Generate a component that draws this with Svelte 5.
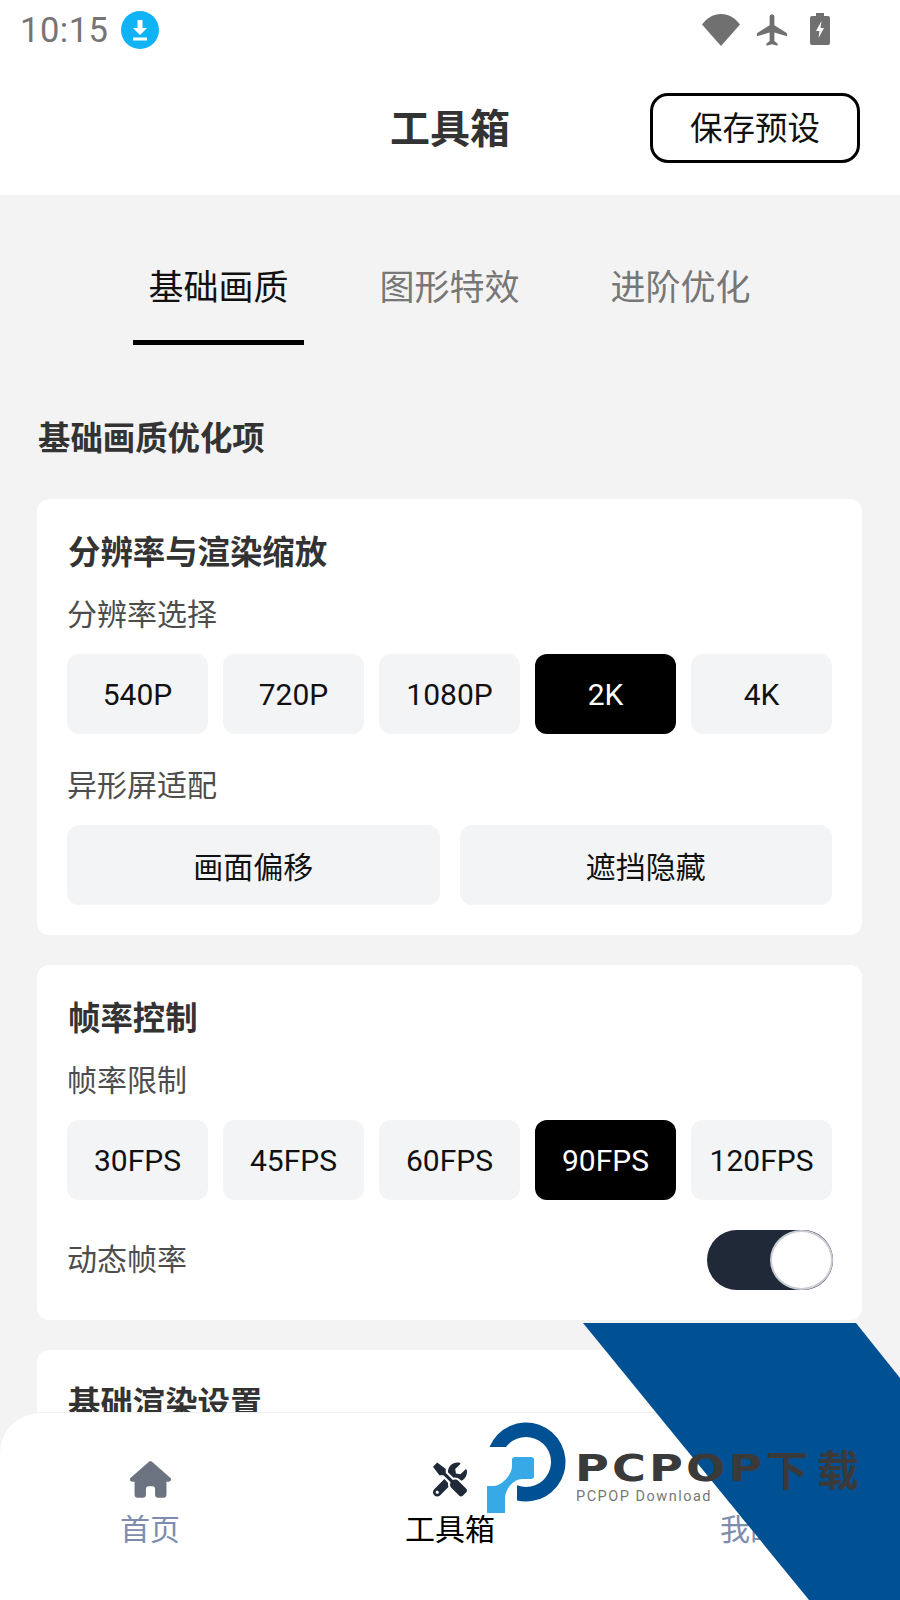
<script>
  const tabs = ["基础画质", "图形特效", "进阶优化"];
  const resolutions = ["540P", "720P", "1080P", "2K", "4K"];
  const notch = ["画面偏移", "遮挡隐藏"];
  const frames = ["30FPS", "45FPS", "60FPS", "90FPS", "120FPS"];
  let resolution = $state("2K");
  let frameRate = $state("90FPS");
  let dynamicRate = $state(true);
  let tab = $state("基础画质");
</script>

<div class="page">
  <div class="statusbar">
    <span class="time">10:15</span>
    <svg class="dl" viewBox="0 0 38 38" width="38" height="38">
      <circle cx="19" cy="19" r="19" fill="#10b4f6" />
      <path d="M16.5 9h5v8h4.500L19 24l-7-7h4.500z" fill="#fff" />
      <rect x="12" y="26.500" width="14" height="3" fill="#fff" />
    </svg>
    <div class="status-icons">
      <svg viewBox="0 0 38 32" width="38" height="32"><path d="M0 10.500C5 4 11.500 0 19 0s14 4 19 10.500L19 32z" fill="#707070" /></svg>
      <svg viewBox="0 0 24 24" width="38" height="38"><path d="M21 16v-2l-8-5V3.500C13 2.670 12.330 2 11.500 2S10 2.670 10 3.500V9l-8 5v2l8-2.500V19l-2 1.500V22l3.500-1 3.500 1v-1.500L13 19v-5.500z" transform="translate(.5 0)" fill="#707070" /></svg>
      <svg viewBox="0 0 20 32" width="20" height="32"><path d="M6 0h8v3h4a2 2 0 0 1 2 2v25a2 2 0 0 1-2 2H2a2 2 0 0 1-2-2V5a2 2 0 0 1 2-2h4z" fill="#707070" /><path d="M11.500 8 6 18h3.500l-1 7L14 15h-3.500z" fill="#fff" /></svg>
    </div>
  </div>

  <header class="header">
    <h1>工具箱</h1>
    <button class="save">保存预设</button>
  </header>

  <main class="content">
    <nav class="tabs">
      {#each tabs as t}
        <button class="tab" class:active={tab === t} onclick={() => (tab = t)}>{t}</button>
      {/each}
    </nav>

    <h2 class="section">基础画质优化项</h2>

    <section class="card">
      <h3>分辨率与渲染缩放</h3>
      <div class="label">分辨率选择</div>
      <div class="options">
        {#each resolutions as r}
          <button class="opt" class:selected={resolution === r} onclick={() => (resolution = r)}>{r}</button>
        {/each}
      </div>
      <div class="label second">异形屏适配</div>
      <div class="options wide">
        {#each notch as n}
          <button class="opt">{n}</button>
        {/each}
      </div>
    </section>

    <section class="card">
      <h3>帧率控制</h3>
      <div class="label">帧率限制</div>
      <div class="options">
        {#each frames as f}
          <button class="opt" class:selected={frameRate === f} onclick={() => (frameRate = f)}>{f}</button>
        {/each}
      </div>
      <div class="toggle-row">
        <span class="label">动态帧率</span>
        <button class="toggle" class:on={dynamicRate} aria-label="动态帧率" onclick={() => (dynamicRate = !dynamicRate)}>
          <span class="knob"></span>
        </button>
      </div>
    </section>

    <section class="card">
      <h3>基础渲染设置</h3>
    </section>
  </main>

  <footer class="bottom">
    <div class="nav-item">
      <svg viewBox="0 0 576 512" width="41" height="37"><path d="M575.800 255.500c0 18-15 32.100-32 32.100h-32l.7 160.200c0 2.700-.2 5.400-.5 8.100V472c0 22.100-17.900 40-40 40H456c-1.100 0-2.200 0-3.300-.1c-1.400 .1-2.800 .1-4.200 .1H392c-22.100 0-40-17.900-40-40V384c0-17.700-14.300-32-32-32H256c-17.700 0-32 14.300-32 32v88c0 22.100-17.900 40-40 40H128.100c-1.500 0-3-.1-4.500-.2c-1.200 .1-2.400 .2-3.600 .2H104c-22.100 0-40-17.900-40-40V360c0-.9 0-1.900 .1-2.800V287.600H32c-18 0-32-14-32-32.100c0-9 3-17 10-24L266.400 8c7-7 15-8 22-8s15 2 21 7L564.800 231.500c8 7 12 15 11 24z" fill="#6b7280" /></svg>
      <span>首页</span>
    </div>
    <div class="nav-item active">
      <svg viewBox="0 0 512 512" width="34" height="34"><path d="M501.100 395.700L384 278.600c-23.100-23.100-57.600-27.600-85.400-13.900L192 158.100V96L64 0 0 64l96 128h62.100l106.600 106.600c-13.600 27.800-9.200 62.300 13.900 85.400l117.100 117.100c14.600 14.600 38.200 14.600 52.700 0l52.700-52.700c14.500-14.600 14.500-38.200 0-52.700zM331.700 225c28.300 0 54.900 11 74.900 31l19.400 19.400c15.800-6.900 30.800-16.500 43.800-29.500 37.100-37.100 49.700-89.300 37.900-136.700-2.200-9-13.500-12.100-20.100-5.500l-74.400 74.400-67.900-11.300L334 98.900l74.400-74.400c6.600-6.600 3.400-17.900-5.700-20.200-47.400-11.700-99.600.9-136.600 37.900-28.500 28.500-41.900 66.100-41.200 103.600l82.100 82.100c8.100-1.900 16.500-2.900 24.700-2.900zm-103.900 82l-56.700-56.700L18.700 402.800c-25 25-25 65.500 0 90.500s65.500 25 90.500 0l123.600-123.600c-7.600-19.900-9.900-41.600-5-62.700zM64 472c-13.200 0-24-10.800-24-24 0-13.300 10.700-24 24-24s24 10.700 24 24c0 13.200-10.700 24-24 24z" fill="#1f2937" /></svg>
      <span>工具箱</span>
    </div>
    <div class="nav-item">
      <svg viewBox="0 0 24 24" width="37" height="37"><circle cx="12" cy="7" r="5" fill="#6b7280" /><path d="M2 22c0-6 4-8 10-8s10 2 10 8z" fill="#6b7280" /></svg>
      <span>我的</span>
    </div>
  </footer>

  <!-- watermark over the screenshot -->
  <div class="wm">
    <svg class="wm-band" viewBox="0 0 900 1600" width="900" height="1600">
      <path d="M583 1323H856L900 1378V1600H809z" fill="#005094" />
      <path d="M489.500 1447A39.500 39.500 0 1 1 517 1500.500V1485.300A25 25 0 1 0 506 1447z" fill="#005094" />
      <path d="M512 1460Q512 1457 515 1457H531Q534 1457 534 1460V1476Q534 1479 531 1479H522C514 1479 505 1489 505 1498V1513H487V1486H494C500 1486 512 1476 512 1466z" fill="#36a9e6" />
    </svg>
    <div class="wm-title">PCPOP</div>
    <div class="wm-cn">下载</div>
    <div class="wm-sub">PCPOP Download</div>
  </div>
</div>

<style>
  :global(body) {
    margin: 0;
  }
  * {
    box-sizing: border-box;
  }
  .page {
    position: relative;
    width: 900px;
    height: 1600px;
    overflow: hidden;
    background: #f3f3f3;
    font-family: Roboto, "Noto Sans CJK SC", sans-serif;
    color: #000;
  }
  button {
    font-family: inherit;
    cursor: pointer;
  }
  .statusbar {
    height: 62px;
    background: #fff;
    display: flex;
    align-items: center;
    padding: 0 70px 2px 20px;
  }
  .time {
    font-size: 34.500px;
    color: #757575;
    letter-spacing: 0.5px;
  }
  .dl {
    margin-left: 13px;
  }
  .status-icons {
    margin-left: auto;
    display: flex;
    align-items: center;
    gap: 13px;
  }
  .status-icons svg:nth-child(2) {
    margin: 0 6px 0 0;
  }
  .status-icons svg:nth-child(3) {
    margin-top: -2px;
  }
  .header {
    position: relative;
    height: 133px;
    background: #fff;
    display: flex;
    align-items: center;
    justify-content: center;
  }
  h1 {
    margin: 0 0 6px;
    font-size: 40px;
    font-weight: 700;
    color: #333;
  }
  .save {
    position: absolute;
    right: 40px;
    top: 31px;
    width: 210px;
    height: 70px;
    padding: 0 0 6px;
    background: #fff;
    border: 3px solid #000;
    border-radius: 18px;
    font-size: 32.500px;
    color: #111;
  }
  .content {
    padding: 0 38px 0 37px;
  }
  .tabs {
    display: flex;
    justify-content: center;
    gap: 60px;
    padding-top: 0;
  }
  .tab {
    width: 171px;
    height: 150px;
    padding: 34px 0 0;
    background: none;
    border: none;
    border-bottom: 5px solid transparent;
    font-size: 35px;
    color: #777;
  }
  .tab.active {
    color: #111;
    border-bottom-color: #000;
  }
  .section {
    margin: 71px 0 0 1px;
    font-size: 32.400px;
    line-height: 46px;
    font-weight: 700;
    color: #333;
  }
  .card {
    background: #fff;
    border-radius: 12px;
    padding: 31px 30px 30px;
    margin-top: 31px;
  }
  .section + .card {
    margin-top: 37px;
  }
  .card + .card {
    margin-top: 30px;
  }
  h3 {
    margin: 0 0 0 1px;
    font-size: 32.400px;
    line-height: 46px;
    font-weight: 700;
    color: #333;
  }
  .label {
    font-size: 30px;
    line-height: 44px;
    color: #4d4d4d;
  }
  .card > .label {
    margin-top: 17px;
  }
  .card > .label.second {
    margin-top: 30px;
  }
  .options {
    display: grid;
    grid-template-columns: repeat(5, 1fr);
    gap: 15px;
    margin-top: 17px;
  }
  .options.wide {
    grid-template-columns: repeat(2, 1fr);
    gap: 20px;
  }
  .opt {
    height: 80px;
    padding: 0;
    background: #f3f4f6;
    border: none;
    border-radius: 12px;
    font-size: 30px;
    color: #111;
  }
  .opt.selected {
    background: #000;
    color: #fff;
  }
  .toggle-row {
    display: flex;
    align-items: center;
    justify-content: space-between;
    margin-top: 30px;
  }
  .toggle {
    position: relative;
    width: 126px;
    height: 60px;
    margin-right: -1px;
    padding: 0;
    border: none;
    border-radius: 30px;
    background: #d1d5db;
  }
  .toggle.on {
    background: #1f2937;
  }
  .knob {
    position: absolute;
    top: 0;
    left: 0;
    width: 63px;
    height: 60px;
    border-radius: 50%;
    background: #fff;
    border: 2px solid #c9ccd2;
  }
  .toggle.on .knob {
    left: 63px;
  }
  .bottom {
    position: absolute;
    left: 0;
    right: 0;
    bottom: 0;
    height: 188px;
    background: #fff;
    border-top: 1px solid #f0f0f0;
    border-radius: 40px 40px 0 0;
    display: grid;
    grid-template-columns: repeat(3, 1fr);
    padding-top: 48px;
  }
  .nav-item {
    display: flex;
    flex-direction: column;
    align-items: center;
    font-size: 30px;
    line-height: 44px;
    color: #7e8cae;
  }
  .nav-item svg {
    height: 37px;
    margin-bottom: 10px;
  }
  .nav-item.active {
    color: #000;
  }
  .wm {
    position: absolute;
    inset: 0;
    pointer-events: none;
  }
  .wm-band {
    position: absolute;
    left: 0;
    top: 0;
  }
  .wm-title {
    position: absolute;
    left: 575px;
    top: 1452px;
    font-family: "DejaVu Sans", sans-serif;
    font-size: 37px;
    line-height: 34px;
    font-weight: 700;
    letter-spacing: 2.500px;
    color: #3a3a3a;
    white-space: nowrap;
    transform: scaleX(1.25);
    transform-origin: left center;
  }
  .wm-cn {
    position: absolute;
    left: 766px;
    top: 1446px;
    font-family: "Noto Sans CJK SC", sans-serif;
    font-size: 42px;
    line-height: 44px;
    font-weight: 700;
    letter-spacing: 9px;
    color: #3a3a3a;
    white-space: nowrap;
  }
  .wm-sub {
    position: absolute;
    left: 576px;
    top: 1489px;
    font-size: 14.500px;
    line-height: 16px;
    letter-spacing: 1.500px;
    color: #777;
    white-space: nowrap;
  }
</style>
